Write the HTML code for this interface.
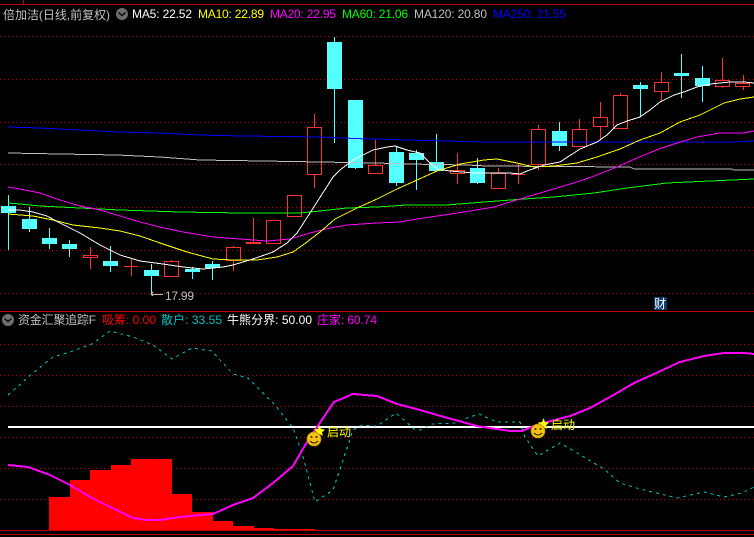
<!DOCTYPE html>
<html><head><meta charset="utf-8"><style>
html,body{margin:0;padding:0;background:#000;width:754px;height:537px;overflow:hidden}
svg{position:absolute;left:0;top:0}
text{font-family:"Liberation Sans","WenQuanYi Zen Hei","Noto Sans CJK SC",sans-serif;font-size:12px}
.g{stroke:#b00000;stroke-width:1;stroke-dasharray:1 3;fill:none}
.m{fill:none;stroke-width:1}
.r{fill:none;stroke:#ff3232;stroke-width:1}
.c{fill:#54ffff;stroke:none}
.w{stroke:#54ffff;stroke-width:1}
.rw{stroke:#ff3232;stroke-width:1}
</style></head><body>
<svg width="754" height="537" viewBox="0 0 754 537" shape-rendering="crispEdges">
<rect width="754" height="537" fill="#000"/>
<path d="M0 4.5H754M23.5 0V4" stroke="#c00000" fill="none"/>
<path d="M0 311.5H754M0 530.5H754M0 534.5H754" stroke="#c00000" fill="none"/>
<path class="g" d="M0 36.5H754M0 79.5H754M0 122.5H754M0 164.5H754M0 207.5H754M0 250.5H754M0 293.5H754M0 344.5H754M0 375.5H754M0 406.5H754M0 437.5H754M0 468.5H754M0 499.5H754"/>

<!-- cyan wicks -->
<path class="w" d="M8.5 195V250M29.5 207V232M49.5 228V249M69.5 240V257M110.5 246V272M151.5 264V295M192.5 267V279M212.5 261V280M334.5 37V143M355.5 100V169M396.5 147V186M416.5 150V190M436.5 134V171M477.5 158V184M559.5 122V151M640.5 82V117M681.5 54V98M702.5 66V102"/>
<!-- cyan bodies -->
<path class="c" d="M1 206H16V213H1ZM22 219H37V229H22ZM42 238H57V244H42ZM62 244H77V249H62ZM103 261H118V266H103ZM144 270H159V276H144ZM185 269H200V272H185ZM205 264H220V268H205ZM327 42H342V89H327ZM348 100H363V168H348ZM389 152H404V183H389ZM409 153H424V160H409ZM429 162H444V171H429ZM470 168H485V183H470ZM552 131H567V146H552ZM633 85H648V89H633ZM674 73H689V76H674ZM695 78H710V86H695Z"/>
<!-- red wicks -->
<path class="rw" d="M90.5 247V255M90.5 258V269M131.5 258V276M171.5 260V261M233.5 246V247M233.5 261V271M253.5 218V243M314.5 114V127M314.5 175V188M375.5 140V165M457.500 153V170M457.500 174V184M498.500 168V173M518.500 164V184M538.500 125V129M538.500 165V170M579.500 119V129M600.500 102V117M600.500 127V140M620.500 93V95M661.500 72V82M661.500 92V102M722.500 58V80M722.500 87V88M743.500 75V83M743.500 87V90"/>
<!-- red bodies -->
<path class="r" d="M83.5 255.5H97.5V257.5H83.5ZM124 266.5H138M164.5 261.5H178.5V276.5H164.5ZM226.5 247.5H240.5V260.5H226.5ZM266.5 220.5H280.5V243.5H266.5ZM287.5 195.5H301.5V216.5H287.5ZM307.5 127.5H321.5V174.5H307.5ZM368.5 165.5H382.5V173.5H368.5ZM450.5 170.5H464.5V173.5H450.5ZM491.5 173.5H505.5V188.5H491.5ZM531.5 129.5H545.5V164.5H531.5ZM572.5 129.5H586.5V146.5H572.5ZM593.5 117.5H607.5V126.5H593.5ZM613.5 95.5H627.5V128.5H613.5ZM654.5 82.5H668.5V91.5H654.5ZM715.5 80.5H729.5V86.5H715.5ZM735.5 83.5H749.5V86.5H735.5Z"/>
<rect x="246" y="242" width="15" height="2" fill="#ff3232"/>
<rect x="511" y="174" width="14" height="1" fill="#ff3232"/>

<!-- MA250 -->
<polyline class="m" stroke="#0000ff" points="8,127 40,128 80,130 120,132 160,133 200,135 243,136 320,137 367,139 377,139 407,140 447,141 487,142 730,142 754,141"/>
<!-- MA120 -->
<polyline class="m" stroke="#c0c0c0" points="8,153 60,154 117,155 160,157 200,160 263,161 377,163 407,164 467,165 487,166 630,167 634,169 732,169 734,170 754,170"/>
<!-- MA60 -->
<polyline class="m" stroke="#00ff00" points="8,203 20,204 40,206 80,208 100,209 120,210 180,212 243,213 300,213 320,211 347,208 377,207 407,205 447,205 484,202 524,199 554,197 594,193 627,188 667,183 710,181 754,179"/>
<!-- MA20 -->
<polyline class="m" stroke="#ff00ff" points="8,187 20,189 40,193 60,200 80,206 100,210 120,216 140,222 160,227 183,232 213,237 240,239 267,241 290,239 310,233 330,228 347,225 377,223 400,222 417,219 444,215 470,211 494,207 520,199 550,190 577,182 597,175 617,167 637,158 659,149 677,143 697,137 720,133 744,133 754,131"/>
<!-- MA10 -->
<polyline class="m" stroke="#ffff00" points="8,214 33,216 53,220 73,225 100,228 120,231 140,236 160,243 187,252 213,259 233,260 257,260 277,257 293,252 307,242 320,232 335,219 357,208 377,199 397,189 417,180 437,171 460,164 484,160 497,159 517,163 534,167 554,166 577,163 597,157 620,149 640,140 660,133 680,122 700,115 724,103 740,99 754,97"/>
<!-- MA5 -->
<polyline class="m" stroke="#ffffff" points="8,210 20,210 33,212 47,216 60,223 80,233 100,245 120,255 140,261 163,264 183,267 203,269 223,267 233,265 253,259 273,252 287,243 297,233 310,213 333,177 340,170 353,160 373,150 387,147 395,146 407,150 420,153 430,163 437,169 450,171 474,173 494,173 510,173 520,174 527,171 544,165 560,162 580,149 597,142 607,135 617,125 627,121 640,117 650,110 660,102 674,95 684,92 697,87 710,84 730,82 744,82 754,83"/>

<!-- 17.99 -->
<path d="M151 294.5H163M153 292L151 294L153 296" stroke="#c0c0c0" fill="none"/>
<text x="165" y="300" fill="#c0c0c0" textLength="29">17.99</text>

<!-- cai -->
<rect x="654" y="297" width="13" height="13" fill="#0a3a6a"/>
<text x="654" y="308" fill="#fff">财</text>

<!-- lower panel -->
<path fill="#ff0000" d="M49 530V497H70V480H90V470H111V465H131V459H172V494H192V512H213V521H233V526H254V528H274V529H315V530Z"/>
<rect x="8" y="426" width="746" height="2" fill="#fff"/>
<polyline fill="none" stroke="#00c0c0" stroke-width="1" stroke-dasharray="3 4" points="8,395 33,373 53,357 70,352 92,344 110,331 133,337 153,345 172,359 192,348 212,351 233,374 248,378 275,405 293,428 302,453 315,502 333,490 353,430 362,425 377,426 396,413 414,429 420,430 432,424 457,423 467,418 479,414 497,422 520,422 525,437 538,456 560,443 577,453 604,469 620,483 640,489 677,498 704,492 724,497 742,493 754,487"/>
<polyline fill="none" stroke="#ff00ff" stroke-width="2" points="8,465 28,467 50,475 70,485 90,497 110,507 133,518 147,520 160,520 180,517 213,514 233,505 253,498 273,483 293,466 307,442 317,427 334,402 353,394 377,396 397,404 420,410 444,417 477,426 510,431 522,431 534,426 547,422 570,416 590,408 610,397 634,383 654,374 680,362 704,356 724,353 744,353 754,354"/>

<!-- signals -->
<g shape-rendering="auto">
<polygon fill="#ffff00" points="319.500,425 321,429 325,429.500 322,432.500 323,436 319.500,434 316,436 317,432.500 314,429.500 318,429"/>
<polygon fill="#ffff00" points="543.500,418 545,422 549,422.500 546,425.500 547,429 543.500,427 540,429 541,425.500 538,422.500 542,422"/>
<circle cx="314" cy="439" r="7" fill="#f2c20c" stroke="#b58a10" stroke-width="0.7"/>
<circle cx="311.500" cy="437" r="1" fill="#332200"/><circle cx="316.500" cy="437" r="1" fill="#332200"/>
<path d="M310 441Q314 445 318 441" stroke="#332200" fill="none"/>
<circle cx="538" cy="431" r="7" fill="#f2c20c" stroke="#b58a10" stroke-width="0.7"/>
<circle cx="535.500" cy="429" r="1" fill="#332200"/><circle cx="540.500" cy="429" r="1" fill="#332200"/>
<path d="M534 433Q538 437 542 433" stroke="#332200" fill="none"/>
</g>
<text x="327" y="436" fill="#ffff00">启动</text>
<text x="551" y="429" fill="#ffff00">启动</text>

<!-- legend top -->
<text x="3" y="19" fill="#c0c0c0" textLength="107">倍加洁(日线,前复权)</text>
<g shape-rendering="auto"><circle cx="122" cy="14" r="6" fill="#6e6e6e"/><path d="M118.500 12.500L122 15.500L125.500 12.500" stroke="#111" stroke-width="1.500" fill="none"/></g>
<text x="132" y="18" fill="#ffffff" textLength="60">MA5: 22.52</text>
<text x="198" y="18" fill="#ffff00" textLength="66">MA10: 22.89</text>
<text x="270" y="18" fill="#ff00ff" textLength="66">MA20: 22.95</text>
<text x="342" y="18" fill="#00ff00" textLength="66">MA60: 21.06</text>
<text x="414" y="18" fill="#c0c0c0" textLength="73">MA120: 20.80</text>
<text x="493" y="18" fill="#0000ff" textLength="73">MA250: 21.55</text>

<!-- legend lower -->
<g shape-rendering="auto"><circle cx="8" cy="320" r="6" fill="#6e6e6e"/><path d="M4.500 318.500L8 321.500L11.500 318.500" stroke="#111" stroke-width="1.500" fill="none"/></g>
<text x="18" y="324" fill="#c0c0c0" textLength="78">资金汇聚追踪F</text>
<text x="102" y="324" fill="#ff0000" textLength="54">吸筹: 0.00</text>
<text x="161" y="324" fill="#00c0c0" textLength="61">散户: 33.55</text>
<text x="227" y="324" fill="#ffffff" textLength="85">牛熊分界: 50.00</text>
<text x="317" y="324" fill="#ff00ff" textLength="60">庄家: 60.74</text>
</svg>
</body></html>
